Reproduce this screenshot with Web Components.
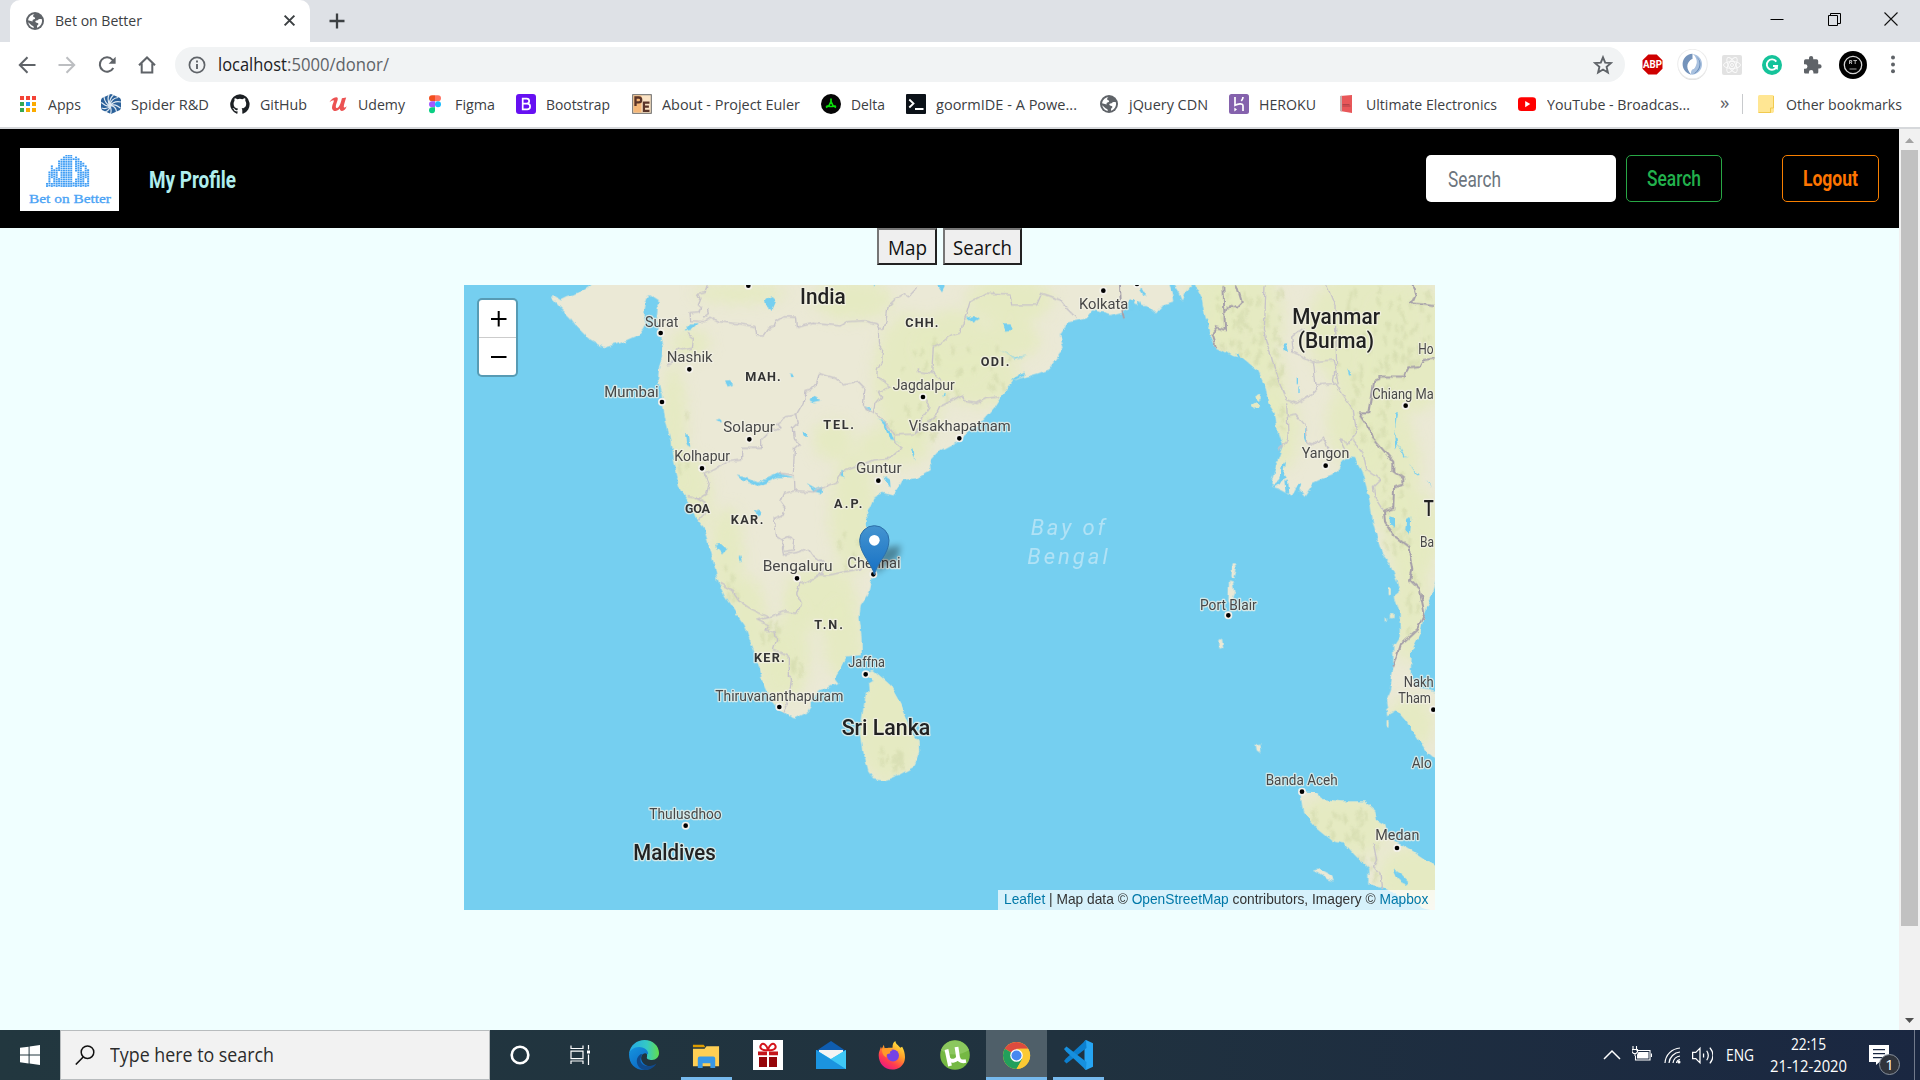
<!DOCTYPE html>
<html lang="en">
<head>
<meta charset="utf-8">
<title>Bet on Better</title>
<style>
html,body{margin:0;height:100%;overflow:hidden}
body{font-family:"Open Sans","Noto Sans",sans-serif;color:#3c4043;background:#f0ffff}
</style>
</head>
<body>
<app-desktop></app-desktop>
<script>
const define=(name,html,setup)=>customElements.define(name,class extends HTMLElement{
  connectedCallback(){
    if(this.shadowRoot)return;
    this.attachShadow({mode:'open'}).innerHTML=html;
    if(setup)setup.call(this,this.shadowRoot);
  }
});

/* One line of text condensed or expanded to a given width */
define('fit-text','<style>:host{display:inline-block;white-space:nowrap;flex:none;line-height:1.4}span{display:inline-block;transform-origin:0 50%}</style><span></span>',function(r){
  const s=r.querySelector('span');s.textContent=this.getAttribute('text');
  const w=+this.getAttribute('w');
  s.style.transform='scaleX('+w/s.getBoundingClientRect().width+')';
  this.style.width=w+'px';
});

const globe='<circle cx="10" cy="10" r="9" fill="#5f6368"/><path d="M10.200 3c-1.500.3-2.300 1.400-2 2.400.3.900 1.800.6 1.900 1.700.1 1-.7 1.300-1.600 1.300-1.100 0-1 1.200-.8 2.100L3 9.200A7.200 7.200 0 0 1 10.200 3zM3.200 11.200l3.600 3.300c.8.700 1.800.4 1.900 1.500v.9a7.200 7.200 0 0 1-5.500-5.700zM16.900 8.300c.8 3.800-1.400 7.300-4.900 8.500 0-1.300-.1-2.400 1-3 .6-.4.5-1.600-.5-1.800-1.200-.2-2-.6-2.200-1.500-.1-.7.600-1.100 1.500-1.100 1.300 0 1.200-.9 2-1.200 1-.4 2.200-.2 3.100.1z" fill="#fff"/>';
const ICONS={
globe,
tabclose:'<path d="M3.500 3.500l13 13M16.500 3.500l-13 13" stroke="#3c4043" stroke-width="2.700"/>',
plus:'<path d="M10 2.500v15M2.500 10h15" stroke="#3c4043" stroke-width="2.300"/>',
back:'<path d="M18.500 10H3M10.500 2.300L2.800 10l7.700 7.700" fill="none" stroke="#5f6368" stroke-width="2"/>',
fwd:'<path d="M1.500 10H17M9.500 2.300l7.700 7.700-7.700 7.700" fill="none" stroke="#bcbec1" stroke-width="2"/>',
reload:'<path d="M16.300 13a7.200 7.200 0 1 1-.8-8.200L17.500 7" fill="none" stroke="#5f6368" stroke-width="2"/><path d="M18.600 1.800v7h-7z" fill="#5f6368"/>',
home:'<path d="M2 10.300L10 2.500l8 7.800M4.700 8.500v9h10.600v-9" fill="none" stroke="#5f6368" stroke-width="2"/>',
info:'<circle cx="10" cy="10" r="7.600" fill="none" stroke="#5f6368" stroke-width="1.700"/><path d="M10 9v5M10 5.500v2" stroke="#5f6368" stroke-width="1.900"/>',
star:'<path d="M10 2.300l2.200 5.300 5.700.5-4.300 3.800 1.300 5.600-4.900-3-4.900 3 1.300-5.600L2.100 8.100l5.700-.5z" fill="none" stroke="#5f6368" stroke-width="1.900"/>',
apps:'<g><path fill="#f44336" d="M2 2h4v4H2zM8 2h4v4H8zM14 2h4v4h-4z"/><path fill="#34a853" d="M2 8h4v4H2zM2 14h4v4H2z"/><path fill="#2196f3" d="M8 8h4v4H8z"/><path fill="#fbab00" d="M14 8h4v4h-4zM8 14h4v4H8zM14 14h4v4h-4z"/></g>',
spider:'<path d="M10 0l9 4 1 2v8l-1 2-9 4-9-4-1-2V6l1-2z" fill="#2a6099"/><g fill="none" stroke="#dfe9f2" stroke-width="1.200"><path d="M9 12C7 8 6.500 4 8 .8M9 12C5.500 10 3.500 7 3 3M9 12C6 12.500 3 11 .3 8.500M9 12c-2 3-5 3-8.500 2M9 12c0 3-2 5-5 6M9 12c1.500 3 1.500 5 .5 8M9 12c4-1 6.500 3 6.500 6M9 12c4-2.500 7-.5 10.500 2M9 12c3-4.500 6.500-5 11-4M9 12c.5-5 4-8 8-8.500M9 12c-1-4.500 0-8 3.500-11"/></g>',
github:'<path fill="#1b1f23" d="M10 .3a10 10 0 0 0-3.200 19.400c.5.1.7-.2.7-.5v-1.900c-2.800.6-3.400-1.200-3.400-1.200-.5-1.100-1.100-1.500-1.100-1.500-.9-.6.1-.6.1-.6 1 .1 1.500 1 1.500 1 .9 1.600 2.400 1.100 2.900.9.1-.7.400-1.100.6-1.400-2.200-.2-4.500-1.100-4.500-5 0-1.100.4-2 1-2.700-.1-.2-.4-1.200.1-2.600 0 0 .8-.3 2.700 1a9.400 9.400 0 0 1 5 0c1.900-1.300 2.700-1 2.700-1 .5 1.400.2 2.400.1 2.600.6.700 1 1.600 1 2.700 0 3.900-2.300 4.700-4.600 5 .4.300.7.900.7 1.900v2.800c0 .3.200.6.700.5A10 10 0 0 0 10 .3z"/>',
udemy:'<path d="M1.500 8.200C3 5.500 6 3 8.500 3.300c2 .3 1.300 2.700.3 5.200-.9 2.300-1.500 4.900-.4 5.500 1.300.6 3-1.600 4-4.600.7-2 1.100-3.700 1.500-5.200l4.300-.7c-1 3.500-2.800 8.400-2.300 9.700.4.800 1.600.2 2.700-1.200-.4 2.800-2.600 5-4.700 4.900-1.400-.1-2-1-2-2.400-1.600 1.900-3.600 2.800-5.500 2.400-3-.7-2.700-3.900-1.600-6.800.8-2.100 1.400-3.700.8-3.900C4.700 6 3 7 1.500 8.200z" fill="#ec5252"/>',
figma:'<path d="M10 1.200H7a3 3 0 0 0 0 6h3z" fill="#f24e1e"/><path d="M10 1.200h3a3 3 0 0 1 0 6h-3z" fill="#ff7262"/><path d="M10 7.200H7a3 3 0 0 0 0 6h3z" fill="#a259ff"/><circle cx="13" cy="10.200" r="3" fill="#1abcfe"/><path d="M10 13.200H7a3 3 0 1 0 3 3z" fill="#0acf83"/>',
boot:'<rect width="20" height="20" rx="3" fill="#6610f2"/><path d="M6.700 4.600h4a2.500 2.500 0 0 1 0 5h-4zm0 5h4.500a2.900 2.900 0 0 1 0 5.800H6.700z" fill="none" stroke="#fff" stroke-width="1.700"/>',
euler:'<rect x=".7" y=".7" width="18.600" height="18.600" fill="#fbe3c4" stroke="#666"/><path d="M1.500 1.500h8v17h-8z" fill="#f5b778"/><path d="M3.500 12V3.500h3.300a2.400 2.400 0 0 1 0 4.800H3.500M17.500 8.700h-5.600v8.100h5.600M11.900 12.700h5" fill="none" stroke="#5a3428" stroke-width="2.300"/>',
delta:'<circle cx="10" cy="10" r="10" fill="#050505"/><path d="M10 4.500v3l-2.200 4.500H5.500L7.800 12M10 7.500l2.200 4.500h2.600M7.500 12.500h5M5 13.500l2-1.500M15 13.500L13 12" fill="none" stroke="#0be30b" stroke-width="1.700"/>',
goorm:'<rect width="20" height="20" rx="1" fill="#0b1118"/><path d="M3.300 5.500L7.500 9.500l-4.200 4M9 15h8.500" fill="none" stroke="#fff" stroke-width="1.800"/>',
heroku:'<rect width="20" height="20" rx="2.500" fill="#8562ad"/><path d="M6 3v8.300c2.500-1.300 8-2.700 8 .6V17M14 3c0 1.800-.8 3-1.700 4" fill="none" stroke="#fff" stroke-width="1.700"/><path d="M5.300 13.500L8 15.500l-2.700 2z" fill="#fff"/>',
ue:'<path d="M4 2l12-1v18L4 17z" fill="#e85759"/><path d="M4 2l2-.2v15.600L4 17z" fill="#c4b0ae"/><path d="M6.500 10.500h7M6.500 12h8" stroke="#a33d45" stroke-width=".8"/>',
yt:'<rect x="1" y="3.300" width="18" height="13.700" rx="3.300" fill="#f00"/><path d="M8.200 7l5 3.100-5 3.100z" fill="#fff"/>',
folder:'<path d="M3.500 1h13a1.500 1.500 0 0 1 1.500 1.500V17c0 1.500-1 2-2 2H3.500A1.500 1.500 0 0 1 2 17.500v-15A1.500 1.500 0 0 1 3.500 1z" fill="#ffe693"/><path d="M2.500 18.500h12.500M14.500 19v-5h3V2" stroke="#f1ca4e" fill="none"/>',
abp:'<path d="M6 .5h8L19.500 6v8L14 19.500H6L.5 14V6z" fill="#cf0000"/>',
dev:'<circle cx="15" cy="16.200" r="14" fill="#00000022"/><circle cx="15" cy="14.600" r="14.300" fill="#fff" stroke="#ececec"/><path d="M15 4.500c-12 1-13 17-1 20.500-5-5-6-12 1-15z" fill="#7493bb"/><path d="M15 4.500c4 3 7 10 0 15-1.500 1.500-2 3.500-1 5.500 13-1 14-18 1-20.500z" fill="#a9c1df"/><path d="M16 6c8 3 8 14-1 18.500 8-2 12-14 1-18.500z" fill="#6287b5"/><ellipse cx="15" cy="14.700" rx="3.200" ry="5" fill="#fff"/>',
react:'<rect width="20" height="20" rx="2" fill="#e2e2e2"/><g fill="none" stroke="#fafafa"><ellipse cx="10" cy="10" rx="8.500" ry="3.500"/><ellipse cx="10" cy="10" rx="8.500" ry="3.500" transform="rotate(60 10 10)"/><ellipse cx="10" cy="10" rx="8.500" ry="3.500" transform="rotate(120 10 10)"/><circle cx="10" cy="10" r="1.500"/></g>',
gram:'<circle cx="10" cy="10" r="10" fill="#15c39a"/><path d="M14.300 6.600A5.200 5.200 0 1 0 15 11h-4" fill="none" stroke="#fff" stroke-width="1.900"/><path d="M15.800 9.800v5l-4-1.500z" fill="#fff"/>',
puzzle:'<path d="M17.500 9.300h-1.300V6a1.700 1.700 0 0 0-1.700-1.700h-3.300V3a2.100 2.100 0 0 0-4.200 0v1.300H3.700A1.700 1.700 0 0 0 2 6v3.200h1.200a2.250 2.250 0 0 1 0 4.500H2v3.200c0 .9.800 1.700 1.700 1.700h3.200v-1.300a2.250 2.250 0 0 1 4.500 0v1.300h3.200c.9 0 1.700-.8 1.700-1.700v-3.400h1.200a2.100 2.100 0 0 0 0-4.200z" fill="#5f6368"/>',
avatar:'<circle cx="15" cy="15" r="14" fill="#000"/><circle cx="15" cy="15" r="8.700" fill="none" stroke="#d5d5d5" stroke-width="1.300"/><path d="M11.500 14v-3.500h2.200v1.700h-2.200m1.300 0l1 1.800M15.300 10.500H19M17.200 10.500V14" fill="none" stroke="#c8c8c8" stroke-width=".9"/><path d="M11.500 19h7" stroke="#a0a0a0"/>',
dots:'<circle cx="10" cy="2.500" r="2" fill="#5f6368"/><circle cx="10" cy="9.500" r="2" fill="#5f6368"/><circle cx="10" cy="16.300" r="2" fill="#5f6368"/>',
min:'<path d="M3.500 10.500h13" stroke="#000"/>',
restore:'<path d="M4.500 6.500h9v10h-9zM6.500 6.500v-2h10v10h-3" fill="none" stroke="#000"/>',
wclose:'<path d="M3.500 3.500l13 13M16.500 3.500l-13 13" stroke="#111" stroke-width="1.100"/>',
win:'<path d="M0 2.800L8.600 1.700V9.500H0zM9.600 1.500L20 0v9.500H9.600zM0 10.500h8.600v7.900L0 17.200zM9.600 10.500H20V20L9.600 18.500z" fill="#fff"/>',
mag:'<circle cx="12.500" cy="7.200" r="6.300" fill="none" stroke="#111" stroke-width="1.500"/><path d="M8.200 12L.8 19.500" stroke="#111" stroke-width="1.600"/>',
cortana:'<circle cx="10" cy="10" r="8.300" fill="none" stroke="#fff" stroke-width="2.600"/>',
taskview:'<path d="M1 .5v3h12v-3M1 19v-3h12v3M1 6.200h12v7.400H1zM18.500 0v4.500M18.500 9.500V20" fill="none" stroke="#fff" stroke-width="1.200"/><path d="M17 5.500h3v3h-3z" fill="#fff"/>',
edge:'<defs><linearGradient id="a" x1="0" x2="1"><stop stop-color="#24a8e8"/><stop offset=".6" stop-color="#35c9c4"/><stop offset="1" stop-color="#62dd4b"/></linearGradient><linearGradient id="b" x1="0" x2=".8" y1="0" y2="1"><stop stop-color="#1594df"/><stop offset="1" stop-color="#0b62c0"/></linearGradient></defs><path d="M0 14C1 5 8 0 15.500 0 24 0 30 6 30 13c0 4-3 7-7 7-3 0-6-1-5-3 1-5-3-8-8-8-6 0-9 3-10 5z" fill="url(#a)"/><path d="M0 14c1-4 5-7 10-7 6 0 10 4 9 8-.5-2-5-3-6.500 1-2 6 5 12 12 10-3 3-6 4-9.500 4C6 30 0 24 0 14z" fill="url(#b)"/><path d="M12.500 16c-4 7 4 14 15 7.500C25 28 20 30 15.500 30 10 29 7 24 8 19c1-3 3-5 5-5z" fill="#114a8b"/>',
explorer:'<path d="M1 4h11l2 2.500H1z" fill="#dd9b00"/><path d="M1 8h12l2-2.500h13V26H1z" fill="#ffcf54"/><path d="M6 28V18a2 2 0 0 1 2-2h14a2 2 0 0 1 2 2v10h-5v-5h-8v5z" fill="#3898e6"/>',
gift:'<path d="M0 0h30v30H0z" fill="#fff"/><path d="M5 11.500h9v3.800H5zM16 11.500h9v3.800h-9z" fill="#c4161b"/><path d="M6 17h8v10H6zM16 17h8v10h-8z" fill="#960509"/><path d="M15 10C9 11 6 8 8 5s6 0 7 5c1-5 5-8 7-5s-1 6-7 5z" fill="none" stroke="#d4141b" stroke-width="2"/>',
mail:'<path d="M0 11L15 1l15 10v3H0z" fill="#0f5db0"/><path d="M3 10h24v12H3z" fill="#f4f4f4"/><path d="M0 10l15 9L30 10v19H0z" fill="#33c2f2"/><path d="M0 10l30 19H0z" fill="#1b94e0"/><path d="M15 19l15 10V10z" fill="#3fc8f6"/>',
firefox:'<defs><linearGradient id="f" x1=".8" x2=".2" y1="0" y2="1"><stop stop-color="#fff044"/><stop offset=".4" stop-color="#ff9a28"/><stop offset=".7" stop-color="#ff3d4e"/><stop offset="1" stop-color="#e4128c"/></linearGradient></defs><path d="M15 7c0-4 1-6 3-7 0 3 3 4 5 7l2-1c5 9 4 20-6 23C8 32-1 23 1 12l2-6 1 2 2-4 1 4c2-1 5-1 8-1z" fill="url(#f)"/><circle cx="15.500" cy="15" r="6.200" fill="#7542e5"/><path d="M4 8c5-2 8 0 11 2-3 0-3 2-2 3-3 0-5 1-4 4-3-1-5-4-5-9z" fill="#ff9b29"/>',
ut:'<circle cx="15" cy="15" r="14.800" fill="#75b843"/><path d="M1 10a15 15 0 0 1 28 0c-7 5-20 7-28 0z" fill="#8bc75e"/><path d="M6.500 9.500L10 26M9 19c2 3 8 2 9-2L16.500 7M18 17c1 4 3 5 8 4" fill="none" stroke="#fff" stroke-width="3.800"/>',
chrome:'<circle cx="15" cy="15" r="14" fill="#fbc934"/><path d="M15 15L2.900 8A14 14 0 0 1 27 8H15z" fill="#dd4b3e"/><path d="M2.900 8A14 14 0 0 0 15 29l6-10.500-6-3.500z" fill="#229f5b"/><path d="M27.200 8A14 14 0 0 1 15 29l6-10.500c2-4 1-8-3-10.500z" fill="#fbc934"/><circle cx="15" cy="15" r="6.500" fill="#fff"/><circle cx="15" cy="15" r="5.200" fill="#4688f1"/>',
vscode:'<path d="M22 0l7 3.300v23.400L22 30l-1.500-1V1z" fill="#26a5f3"/><path d="M22 0L2 18.500 0 21l2.500 2.500L22.500 8z" fill="#0c7fcf"/><path d="M22 30L2 11.500 0 9l2.500-2.500L22.500 22z" fill="#1690df"/>',
up:'<path d="M2 14l8-8 8 8" fill="none" stroke="#fff" stroke-width="1.500"/>',
battery:'<path d="M4.500 5.500H18v9.500H3.500V11M19.500 8.500v3.500M1 1v3.500h3.500V1M0 4.500h5.500v2.500L4 8.500H1.500L0 7zM3 8.500V11" fill="none" stroke="#fff" stroke-width="1.100"/><path d="M6.500 7H16.500v6.500H5V9.500z" fill="#fff"/>',
wifi:'<g fill="none" stroke="#fff" stroke-width="1.200"><path d="M2 18A16 16 0 0 1 17 3M6 18A12 12 0 0 1 17 7M10 18a8 8 0 0 1 7-7" /><path d="M13.500 18a4 4 0 0 1 3.500-3.500"/></g><circle cx="16" cy="17" r="1.500" fill="#fff"/>',
vol:'<path d="M.6 7h3l4-4v14l-4-4h-3zM11 8v4M14 5.500c2 3 2 6 0 9M17 2.500c4 5 4 10 0 15" fill="none" stroke="#fff" stroke-width="1.200"/>',
notif:'<path d="M0 0h20v17H10.500L7 20v-3H0z" fill="#fff"/><path d="M4 4.700h12M4 8.700h12M4 12.700h12" stroke="#1a2741" stroke-width="1.200"/>'
};
define('ui-icon','<style>:host{display:block;flex:none}svg{display:block;width:100%;height:100%}</style><svg></svg>',function(r){
  const n=this.getAttribute('name'),s=+this.getAttribute('size')||20;
  const box={dev:30,avatar:30,edge:30,explorer:30,gift:30,mail:30,firefox:30,ut:30,chrome:30,vscode:30}[n]||20;
  const v=r.querySelector('svg');v.setAttribute('viewBox','0 0 '+box+' '+box);v.innerHTML=ICONS[n];
  this.style.width=this.style.height=s+'px';
});

define('tab-strip',`<style>:host{display:flex;height:42px;background:#dee1e6;align-items:stretch;padding-left:10px;box-sizing:border-box}
.tab{display:flex;align-items:center;width:300px;box-sizing:border-box;padding:0 13px 1px 15px;background:#fff;border-radius:10px 10px 0 0;font-size:15px;gap:10px}
.tab ui-icon:last-child{margin-left:auto}.new{align-self:center;margin-left:17px}.win{display:flex;align-items:center;gap:37px;margin-left:auto;padding:0 19px 5px 0}</style>
<div class="tab"><ui-icon name="globe"></ui-icon><fit-text w="87" text="Bet on Better"></fit-text><ui-icon name="tabclose" size="15"></ui-icon></div>
<ui-icon class="new" name="plus"></ui-icon><div class="win"><ui-icon name="min"></ui-icon><ui-icon name="restore"></ui-icon><ui-icon name="wclose"></ui-icon></div>`);

define('browser-toolbar',`<style>:host{display:flex;height:45px;background:#fff;align-items:center;padding:0 17px 0 17px;box-sizing:border-box}
.nav{display:flex;gap:20px;width:158px}.url{display:flex;align-items:center;flex:none;width:1450px;height:35px;box-sizing:border-box;border-radius:18px;background:#f1f3f4;padding:0 12px 0 12px;font-size:18px;color:#5f6368}
.url fit-text:nth-of-type(1){color:#202124;margin-left:11px}.url ui-icon:last-child{margin-left:auto}
.ext{display:flex;align-items:center;padding-left:17px}.abp{display:grid}.abp>*{grid-area:1/1;place-self:center;color:#fff;font:bold 10.500px Roboto,sans-serif}</style>
<div class="nav"><ui-icon name="back"></ui-icon><ui-icon name="fwd"></ui-icon><ui-icon name="reload"></ui-icon><ui-icon name="home"></ui-icon></div>
<div class="url"><ui-icon name="info"></ui-icon><fit-text w="69" text="localhost"></fit-text><fit-text w="102" text=":5000/donor/"></fit-text><ui-icon name="star"></ui-icon></div>
<div class="ext"><span class="abp"><ui-icon name="abp" size="21"></ui-icon><fit-text w="19" text="ABP"></fit-text></span><ui-icon name="dev" size="31" style="margin-left:14px"></ui-icon><ui-icon name="react" size="20" style="margin-left:14px"></ui-icon><ui-icon name="gram" style="margin-left:20px"></ui-icon><ui-icon name="puzzle" style="margin-left:20px"></ui-icon><ui-icon name="avatar" size="30" style="margin-left:16px"></ui-icon><ui-icon name="dots" style="margin-left:15px"></ui-icon></div>`);

define('book-mark','<style>:host{display:flex;align-items:center;flex:none;gap:10px;font-size:15px;color:#3c4043}</style><slot></slot>',function(){
  this.style.width=this.getAttribute('w')+'px';
});
const marks=[['apps','Apps',33,83],['spider','Spider R&amp;D',78,129],['github','GitHub',47,98],['udemy','Udemy',47,97],['figma','Figma',40,91],['boot','Bootstrap',64,116],['euler','About - Project Euler',138,189],['delta','Delta',34,85],['goorm','goormIDE - A Powe...',141,193],['globe','jQuery CDN',79,130],['heroku','HEROKU',57,107],['ue','Ultimate Electronics',131,181],['yt','YouTube - Broadcas...',143,203]];
define('bookmark-bar',`<style>:host{display:flex;align-items:center;height:42px;box-sizing:border-box;background:#fff;border-bottom:2px solid #d6d8db;padding:0 0 6px 18px}
.more{font-size:19px;width:22px;color:#5f6368;line-height:20px;padding-bottom:4px}.bar{width:1px;height:20px;background:#c8cacd;margin-right:13px}</style>`+
marks.map(m=>`<book-mark w="${m[3]}"><ui-icon name="${m[0]}"></ui-icon><fit-text w="${m[2]}" text="${m[1]}"></fit-text></book-mark>`).join('')+
'<span class="more">»</span><span class="bar"></span><book-mark w="150"><ui-icon name="folder"></ui-icon><fit-text w="116" text="Other bookmarks"></fit-text></book-mark>');

define('brand-logo','<style>:host{display:flex;flex-direction:column;align-items:center;width:99px;height:63px;background:#fff;box-sizing:border-box;padding-top:7px;font:500 13px "Liberation Serif",serif;color:#4aa3f5;-webkit-text-stroke:.3px #4aa3f5}svg{display:block;margin-left:-4px}fit-text{line-height:16px;margin-top:4px}</style><svg width="44" height="32"></svg><fit-text w="82" text="Bet on Better"></fit-text>',function(r){
  /* roof height of each dotted column */
  const h=[4,16,20,17,22,25,27,29,31,32,31,28,29,27,25,23,21,16];let s='';
  h.forEach((n,i)=>{for(let y=0;y<n;y+=2.200){
    const core=i>6&&i<11;
    if(!core&&y>3&&(i*5+Math.round(y*3))%7===2)continue;
    if(i===11&&y>3&&y<22)continue;
    s+=`<rect x="${i*2.420}" y="${30.200-y-(core?0:(i%2)*.5)}" width="2" height="1.700" fill="#3f9df5"/>`}});
  r.querySelector('svg').innerHTML=s;
});

define('site-nav',`<style>:host{display:flex;align-items:center;height:99px;background:#000;padding:2px 20px 0;box-sizing:border-box;font-family:"Liberation Sans Narrow",Roboto,sans-serif;font-size:22px}
.p{color:#afeeee;margin:2px 0 0 30px;font-weight:bold;font-size:24px}.box{display:flex;align-items:center;height:47px;box-sizing:border-box;border-radius:5px;justify-content:center;margin-bottom:2px}
.in{margin-left:auto;width:190px;background:#fff;color:#6c757d;justify-content:flex-start;padding:3px 0 0 22px}.s{width:96px;border:1px solid #28a745;color:#22b14c;margin-left:10px;font-weight:500;padding-top:2px}.l{width:97px;border:1px solid #f77f00;color:#ff7500;margin-left:60px;font-weight:700;padding-top:2px}</style>
<brand-logo></brand-logo><fit-text class="p" w="87" text="My Profile"></fit-text><div class="box in"><fit-text w="53" text="Search"></fit-text></div><div class="box s"><fit-text w="54" text="Search"></fit-text></div><div class="box l"><fit-text w="55" text="Logout"></fit-text></div>`);

define('mode-buttons',`<style>:host{display:flex;justify-content:center;gap:6px;height:37px}.b{display:flex;align-items:center;justify-content:center;box-sizing:border-box;border:2px solid;border-color:#767676 #222 #222 #767676;background:#efefef;color:#111;font-size:20px;height:37px;padding-top:2px}</style>
<div class="b" style="width:60px"><fit-text w="39" text="Map"></fit-text></div><div class="b" style="width:79px"><fit-text w="59" text="Search"></fit-text></div>`);

/* Map geometry: 3 units per pixel */
const LAND=['M400 10L370 32 345 42 320 48 300 58 285 48 275 55 300 82 330 112 352 142 385 175 432 202 470 192 500 180 540 162 552 145 560 130 553 98 558 70 567 42 580 52 600 65 590 82 587 120 600 160 612 200 608 235 597 260 594 300 605 345 610 380 620 430 632 480 640 540 650 590 662 630 690 670 710 718 732 745 745 790 762 850 775 905 795 950 825 995 855 1035 870 1080 885 1120 900 1165 907 1205 925 1245 955 1285 985 1308 1005 1316 1045 1295 1055 1280 1055 1255 1080 1230 1135 1212 1122 1195 1140 1165 1158 1128 1205 1125 1204 1070 1198 1010 1202 975 1228 935 1240 885 1238 830 1225 760 1220 700 1240 655 1270 638 1300 647 1325 600 1370 595 1415 570 1412 542 1440 512 1490 485 1570 420 1605 380 1630 340 1660 302 1735 280 1765 268 1790 235 1811 205 1800 165 1825 128 1880 115 1900 90 1950 105 1990 95 2010 60 2030 75 2060 75 2085 100 2105 78 2140 66 2136 40 2125 10z',
'M2205 10L2225 50 2235 105 2250 160 2270 205 2310 225 2350 235 2395 272 2418 320 2425 368 2445 400 2455 460 2468 500 2450 550 2431 620 2460 628 2495 646 2510 620 2535 648 2560 608 2600 590 2630 578 2645 545 2665 532 2685 533 2705 570 2720 620 2733 680 2740 730 2765 820 2790 850 2810 900 2820 940 2805 952 2820 1000 2820 1070 2800 1100 2800 1160 2790 1230 2778 1260 2785 1305 2810 1290 2840 1325 2870 1370 2900 1415 2930 1440 2930 1235 2910 1228 2870 1222 2852 1180 2855 1110 2880 1060 2890 1010 2918 940 2930 900 2930 10z',
'M2522 1550L2530 1535 2570 1538 2590 1558 2640 1565 2710 1565 2745 1595 2750 1620 2775 1635 2782 1670 2820 1690 2860 1715 2930 1762 2930 1900 2820 1850 2770 1822 2725 1812 2725 1765 2685 1725 2655 1690 2625 1685 2570 1640 2530 1595z',
'M1212 1178L1240 1170 1290 1215 1320 1270 1335 1310 1355 1360 1375 1385 1377 1415 1362 1460 1320 1482 1280 1499 1240 1495 1222 1470 1208 1415 1200 1360 1205 1300 1215 1245 1230 1235 1228 1210 1245 1200z',
'M2318 850l9 0 3 18-8 30-8-8zM2307 904l12 4 4 28-12 34-6-6zM2278 1080l8-4 4 28-12 2zM2387 1393l14-2 3 30-14-10zM2375 375l14-8 8 14-10 8zM2383 350l16-8 6 14-12 6zM2140 10l60 0-20 22-12 30-8-20zM2558 1768l16-2 40 22 8 16-20-6-22-16zM2780 1320h8v18h-8zM2783 925h6v20h-6zM2790 1000h10v14h-10zM2774 1012h4v10h-4z'].join('');
const BORD='M742 15L735 35 712 40 720 55 712 75 725 80 720 95 690 98 692 122 730 125 750 112 775 125 840 132 885 140 890 165 912 165 925 145 940 140 945 125 970 110 1010 112 1012 142 1060 130 1140 138 1160 125 1215 122 1250 132 1256 145 1272 148 1280 110 1285 75 1305 55 1330 40 1345 48 1370 22 M745 85L748 98 730 112 M680 160L700 175 697 205 670 210 655 205 640 225 640 250 620 255 M1256 145L1255 190 1268 210 1265 245 1252 270 1250 290 1290 320 1255 335 1262 350 1245 370 1240 400 1210 375 1215 325 1195 305 1150 312 1130 295 1075 280 1065 315 1050 330 1035 335 1030 370 1010 405 980 410 950 430 960 440 930 455 905 480 905 505 845 505 845 540 800 545 765 565 735 580 748 610 740 640 720 655 680 650 M1010 405L1015 430 1000 445 1003 475 1020 490 1003 505 1000 585 960 580 M1003 585L1005 632 1060 636 1130 605 1150 575 1240 540 1290 535 1325 505 1305 490 1300 460 1275 425 1245 400 M1305 465L1365 462 1405 425 1430 400 1440 380 1480 360 1505 345 1520 365 1550 370 1580 355 1620 350 M1395 360L1410 380 1390 410 1365 462 M1005 632L970 640 960 665 975 685 970 705 942 715 950 770 965 780 970 825 1020 815 1045 805 1060 825 1100 855 1080 885 1030 910 1020 905 1010 940 1025 970 1010 1000 970 995 925 1012 895 1020 925 1035 915 1050 945 1055 950 1080 940 1110 975 1125 985 1130 985 1190 995 1195 990 1225 975 1245 985 1275 970 1298 M780 910L820 935 840 965 870 985 925 1012 M1080 885L1110 885 1200 865 1195 870 M965 780l20-10 20 10-5 30-25 5z M1440 300L1420 280 1375 275 1380 265 M1415 280L1420 200 1440 190 1480 163 1500 155 1520 100 1530 65 1575 40 1650 42 1655 75 1730 75 1745 40 1800 60 1820 85 1850 115 M2415 15L2410 150 2420 190 2430 215 2450 290 2480 360 2510 370 2560 340 2570 330 2560 245 2500 215 2495 170 2530 145 M2600 15L2625 80 2630 250 2620 300 2680 390 2690 460 2665 490 2640 480 2665 530 M2480 410L2510 405 2535 435 2540 490 2560 495 2590 470 2610 525 M2560 245L2620 240 2635 310 2565 315 M2480 370L2485 480 2455 510 M2680 480L2710 520 2720 570 2760 600 2740 620 2745 650 2770 690 M2740 1690L2750 1740 2740 1760 2760 1780 2765 1830 M700 650L735 670 735 700 715 720';
const INTL='M1980 15L1982 60 1992 115 M2290 15L2295 150 2270 142 2257 160 2272 205 M2330 15L2345 65 2330 80 2315 75 2295 90 M2860 10L2868 40 2855 70 2925 78 M2925 235L2890 240 2880 258 2845 262 2835 290 2755 290 2755 300 2742 305 2735 355 2728 400 2698 400 2725 440 2735 470 2800 545 2800 575 2830 595 2830 610 2802 620 2800 685 2772 695 2775 725 2805 770 2845 800 2857 870 2850 900 2880 930 2893 1000 2870 1050 2820 1095 2800 1160';
const LAKES='M915 58l20-10 14 14-12 28-20-16zM670 155l20-24 24-2-20 20zM795 302l18-2 10 14-20 6zM770 420l16-4 2 12zM675 465l12 2 4 34-12-8zM988 282l8-2 6 12-10 2zM1048 362l12-12 22 14-20 6zM1028 455l14 4-2 12-10-2zM1210 375l24 8-2 6zM1252 415l30 18 18 52 25 4-36-8-14-40zM830 587l24 4 40 16 60-26 50 12-50-2-60 28-30-16-20-4zM1040 612l28 16 20-8-4 20-24-6zM1144 570l10 2 2 22-12-4zM1355 500l10 14 2 28-6-16zM880 695l20-6 6 10-14 10zM768 800l10-12 22 18-14 14zM836 830l8-4 4 18-10 2zM1270 585l20 14 2 24-16-20zM1518 115l22-8 20 12-20 12zM1628 130l24 0 6 20-20 2zM1615 210l50 22 38-6-36 10zM1650 302l40-24 4 10-30 14zM2470 190l8 0 6 30-10-6zM2664 265l14 20-8 2zM2510 292l4 0 0 20-4 0zM2515 320l4 0 0 18-4 0zM2532 440l6 30 2 24-8-20zM2470 550l8-8-8 60-16 10zM2805 400l6 0-6 50 12 44-10 10zM2815 490l20 40 10 5-15-5zM2850 555l30 30-5 3zM2900 600l12 20-4 0zM2788 705l14 8 0 30-12-12zM2838 720l16-10-4 56-14-14zM2800 1765l28 18 20 20-8 10-24-12zM1450 350l8-24-2 22zM1220 10h30l-6 14zM1430 10h28l-12 24z';
let seed=7;const rnd=()=>(seed=(seed*16807)%2147483647)/2147483647;
let patches='';
[[640,450,40,200],[700,650,55,120],[800,820,50,140],[860,1010,60,120],[940,1160,50,120],[1180,60,120,60],[1350,300,110,200],[1300,500,110,60],[1480,200,110,110],[1560,300,120,80],[1650,60,130,70],[1650,180,90,60],[1120,480,60,60],[1180,700,70,180],[1080,950,110,90],[1150,1080,60,120],[1000,1110,50,150],[690,190,60,40],[840,40,140,30],[1290,1330,110,180],[2260,80,80,130],[2360,120,110,160],[2400,320,80,140],[2460,450,60,120],[2700,150,160,180],[2850,200,140,200],[2700,430,100,140],[2780,560,100,180],[2860,760,90,130],[2850,960,60,190],[2850,1330,70,80],[2640,1640,150,100],[2860,1790,110,90]].forEach(p=>patches+=`<ellipse cx="${p[0]}" cy="${p[1]}" rx="${p[2]}" ry="${p[3]}" fill="#e4eac0" opacity=".9"/>`);
let hills='';
const ridge=(x,y,w,h,n)=>{for(let i=0;i<n;i++){const a=x+rnd()*w,b=y+rnd()*h;hills+=`<path d="M${a|0} ${b|0}q${(rnd()*12)|0} ${(6+rnd()*12)|0} ${(rnd()*16-8)|0} ${(12+rnd()*18)|0}"/>`}};
ridge(2270,20,200,220,50);ridge(2420,240,50,250,18);ridge(2630,20,280,270,65);ridge(2680,300,110,260,30);ridge(2770,560,80,250,22);ridge(2840,880,40,180,10);ridge(2560,1575,160,100,30);ridge(2690,1680,60,110,14);ridge(1330,170,330,180,26);ridge(1270,350,170,120,12);ridge(1255,1400,70,60,12);ridge(900,1020,60,50,12);ridge(980,1120,50,60,8);ridge(790,830,40,120,7);ridge(650,380,40,200,6);ridge(1110,750,90,110,6);
const dots=[[865,17],[602,159],[688,268],[606,366],[868,478],[726,565],[1389,351],[1498,475],[1255,602],[1011,895],[1240,883],[1217,1183],[958,1281],[677,1637],[1930,32],[2837,377],[2597,557],[2305,1006],[2526,1535],[2811,1704],[2920,1289],[2031,12]];
const L=[['c','India',1020,1157,72],['t','Surat',555,655,140],['t','Nashik',620,758,245],['t','Mumbai',433,596,351],['t','Solapur',790,945,456],['t','Kolhapur',643,810,544],['s','MAH.',856,962,303],['s','CHH.',1336,1435,142],['t','Jagdalpur',1298,1484,331],['s','TEL.',1090,1182,447],['t','Visakhapatnam',1346,1652,452],['t','Guntur',1188,1325,579],['s','A.P.',1122,1207,683],['s','GOA',675,750,698],['s','KAR.',812,910,731],['t','Bengaluru',908,1118,872],['t','Chennai',1162,1322,863],['s','T.N.',1063,1149,1046],['s','KER.',882,974,1147],['t','Jaffna',1165,1275,1161],['t','Thiruvananthapuram',766,1150,1262],['c','Sri Lanka',1145,1411,1364],['t','Thulusdhoo',568,785,1617],['c','Maldives',520,767,1740],['t','Kolkata',1857,2005,86],['s','ODI.',1562,1648,259],['c','Myanmar',2497,2760,131],['c','(Burma)',2513,2742,203],['t','Ho',2875,2921,222],['t','Chiang Ma',2737,2921,357],['t','Yangon',2525,2668,534],['w','Bay of',1712,1944,766],['w','Bengal',1702,1952,853],['c','T',2891,2921,708],['t','Ba',2880,2922,800],['t','Port Blair',2220,2390,989],['t','Nakh',2831,2921,1220],['t','Tham',2815,2913,1268],['t','Alo',2855,2915,1464],['t','Banda Aceh',2417,2633,1516],['t','Medan',2746,2878,1681]];
define('leaflet-map',`<style>:host{display:block;position:relative;width:971px;height:625px;background:#75cff0;overflow:hidden}
svg.m{display:block;width:971px;height:625px}text{font-family:Roboto,sans-serif;paint-order:stroke;stroke:#f2f0e6;stroke-width:8;stroke-opacity:.75;stroke-linejoin:round}
.c{font-size:64px;font-weight:500;fill:#222}.t{font-size:46px;font-weight:450;fill:#484848}.s{font-size:38px;font-weight:700;fill:#333}.w{font-size:66px;font-style:italic;fill:#b1e2f5;stroke:none;letter-spacing:9px}
.zoom{position:absolute;left:13px;top:13px;width:37px;border:2.500px solid rgba(0,0,0,.25);border-radius:5px;background:#fff;background-clip:padding-box}.zoom svg{display:block;width:37px;height:37px}.zoom svg+svg{border-top:1px solid #ccc}
.at{position:absolute;right:0;bottom:0;height:20px;width:437px;background:rgba(255,255,255,.7);font:13.750px/19px "Liberation Sans",sans-serif;color:#333;box-sizing:border-box;padding-left:6px;display:flex;white-space:pre}.at a{color:#0078a8}</style>
<svg class="m" viewBox="12 15 2913 1875"><defs><filter id="r" x="-2%" y="-2%" width="104%" height="104%"><feTurbulence type="fractalNoise" baseFrequency=".035" numOctaves="3" seed="3"/><feDisplacementMap in="SourceGraphic" scale="16" xChannelSelector="R" yChannelSelector="G"/></filter><filter id="bl" x="-20%" y="-20%" width="140%" height="140%"><feGaussianBlur stdDeviation="20"/></filter><filter id="sh" x="-50%" y="-50%" width="200%" height="200%"><feGaussianBlur stdDeviation="9"/></filter><filter id="hb"><feGaussianBlur stdDeviation="3.500"/></filter><clipPath id="k"><path d="${LAND}"/></clipPath><linearGradient id="pin" x2="0" y2="1"><stop stop-color="#4494d0"/><stop offset="1" stop-color="#1670c4"/></linearGradient></defs>
<g filter="url(#r)"><path d="${LAND}" fill="#ebe9d6"/><g clip-path="url(#k)"><g filter="url(#bl)">${patches}</g><g filter="url(#hb)" fill="none" stroke="#cfd6a8" stroke-width="8" opacity=".55">${hills}</g></g><path d="${LAKES}" fill="#75cff0"/><path d="${BORD}" fill="none" stroke="#c7c3c9" stroke-width="4"/><path d="${INTL}" fill="none" stroke="#a7a1aa" stroke-width="6"/><path d="M1905 95l5 20M1925 98l3 20M2000 95l8-30M2025 60l-10 30M2045 90l-8-25M2055 45l-12-20M2240 120l6 20M2300 220l20 15M2340 240l-10-20M2435 620l40-30M2480 600l4 40M2520 610l-10 30" stroke="#75cff0" stroke-width="8" fill="none"/></g>
${dots.map(d=>`<circle cx="${d[0]}" cy="${d[1]}" r="9.500" fill="#000" stroke="#f4f2ec" stroke-width="5"/>`).join('')}
${L.map(l=>`<text class="${l[0]}" x="${l[2]}" y="${l[4]}" textLength="${l[3]-l[2]}" lengthAdjust="${l[0]=='s'||l[0]=='w'?'spacing':'spacingAndGlyphs'}">${l[1]}</text>`).join('')}
<path d="M1243 885L1268 805 1322 795 1315 830z" fill="#000" opacity=".35" filter="url(#sh)"/>
<path d="M1243 884C1236 850 1199 822 1199 781a44 44 0 0 1 88 0c0 41-37 69-44 103z" fill="url(#pin)" stroke="#2c6ea8" stroke-width="3"/><circle cx="1243" cy="781" r="16" fill="#fff"/></svg>
<div class="zoom"><svg viewBox="0 0 37 37"><path d="M12 19h15.500M19.700 11v15.500" stroke="#000" stroke-width="2"/></svg><svg viewBox="0 0 37 37"><path d="M12 19h15.500" stroke="#000" stroke-width="2"/></svg></div>
<div class="at"><a>Leaflet</a> | Map data © <a>OpenStreetMap</a> contributors, Imagery © <a>Mapbox</a></div>`);

define('scroll-bar',`<style>:host{display:flex;flex-direction:column;width:21px;background:#f1f1f1;align-items:center}svg{flex:none;display:block}.t{width:17px;height:776px;background:#c1c1c1;margin-bottom:auto}</style><svg width="21" height="21"><path d="M6 14h9l-4.500-5z" fill="#a3a3a3"/></svg><div class="t"></div><svg width="21" height="21"><path d="M6 9h9l-4.500 5z" fill="#505050"/></svg>`);

define('task-app',`<style>:host{display:flex;align-items:center;justify-content:center;height:50px;flex:none;box-sizing:border-box}:host([open]){border-bottom:3px solid #76b9ed;padding-top:3px}:host([active]){background:#4f5f69}</style><slot></slot>`,function(){this.style.width=this.getAttribute('w')+'px'});
define('task-bar',`<style>:host{display:flex;height:50px;background:linear-gradient(90deg,#22373f,#20323f 55%,#1a2741);color:#fff;align-items:center}
.q{display:flex;align-items:center;width:430px;height:50px;box-sizing:border-box;border:1px solid #b8bcbe;background:#f2f2f2;color:#2b2b2b;font-size:20px;padding-left:14px;gap:15px}
.tray{display:flex;align-items:center;margin-left:auto;font-size:16px}.clock{display:flex;flex-direction:column;align-items:center;width:77px;margin-left:16px;line-height:23px}.n{position:relative;margin:0 0 1px 22px}.badge{position:absolute;left:10px;top:9px;width:19px;height:19px;border-radius:50%;background:#30343c;border:1px solid #88919c;text-align:center;font-size:15px;line-height:19px}.end{width:5px;border-left:1px solid #717a8b;height:50px;margin-left:25px}</style>
<task-app w="60"><ui-icon name="win"></ui-icon></task-app><div class="q"><ui-icon name="mag"></ui-icon><fit-text w="164" text="Type here to search"></fit-text></div>
<task-app w="60"><ui-icon name="cortana"></ui-icon></task-app><task-app w="60"><ui-icon name="taskview"></ui-icon></task-app><task-app w="68"><ui-icon name="edge" size="30"></ui-icon></task-app><task-app w="51" open style="margin-left:3px"><ui-icon name="explorer" size="29"></ui-icon></task-app><task-app w="72"><ui-icon name="gift" size="30"></ui-icon></task-app><task-app w="54"><ui-icon name="mail" size="30"></ui-icon></task-app><task-app w="69"><ui-icon name="firefox" size="29"></ui-icon></task-app><task-app w="55"><ui-icon name="ut" size="30"></ui-icon></task-app><task-app w="61" open active style="margin-left:4px"><ui-icon name="chrome" size="29"></ui-icon></task-app><task-app w="51" open style="margin-left:6px"><ui-icon name="vscode" size="30"></ui-icon></task-app>
<div class="tray"><ui-icon name="up"></ui-icon><ui-icon name="battery" style="margin-left:10px"></ui-icon><ui-icon name="wifi" style="margin-left:11px"></ui-icon><ui-icon name="vol" size="21" style="margin-left:9px"></ui-icon><fit-text w="28" text="ENG" style="margin-left:13px"></fit-text><div class="clock"><fit-text w="35" text="22:15"></fit-text><fit-text w="77" text="21-12-2020"></fit-text></div><div class="n"><ui-icon name="notif"></ui-icon><span class="badge">1</span></div><div class="end"></div></div>`);

define('app-desktop',`<style>:host{display:flex;flex-direction:column;width:1920px;height:1080px}.view{display:flex;flex:1;min-height:0}.page{display:flex;flex-direction:column;width:1899px;background:#f0ffff}leaflet-map{margin:20px 0 0 464px}</style>
<tab-strip></tab-strip><browser-toolbar></browser-toolbar><bookmark-bar></bookmark-bar>
<div class="view"><div class="page"><site-nav></site-nav><mode-buttons></mode-buttons><leaflet-map></leaflet-map></div><scroll-bar></scroll-bar></div><task-bar></task-bar>`);
</script>
</body>
</html>
